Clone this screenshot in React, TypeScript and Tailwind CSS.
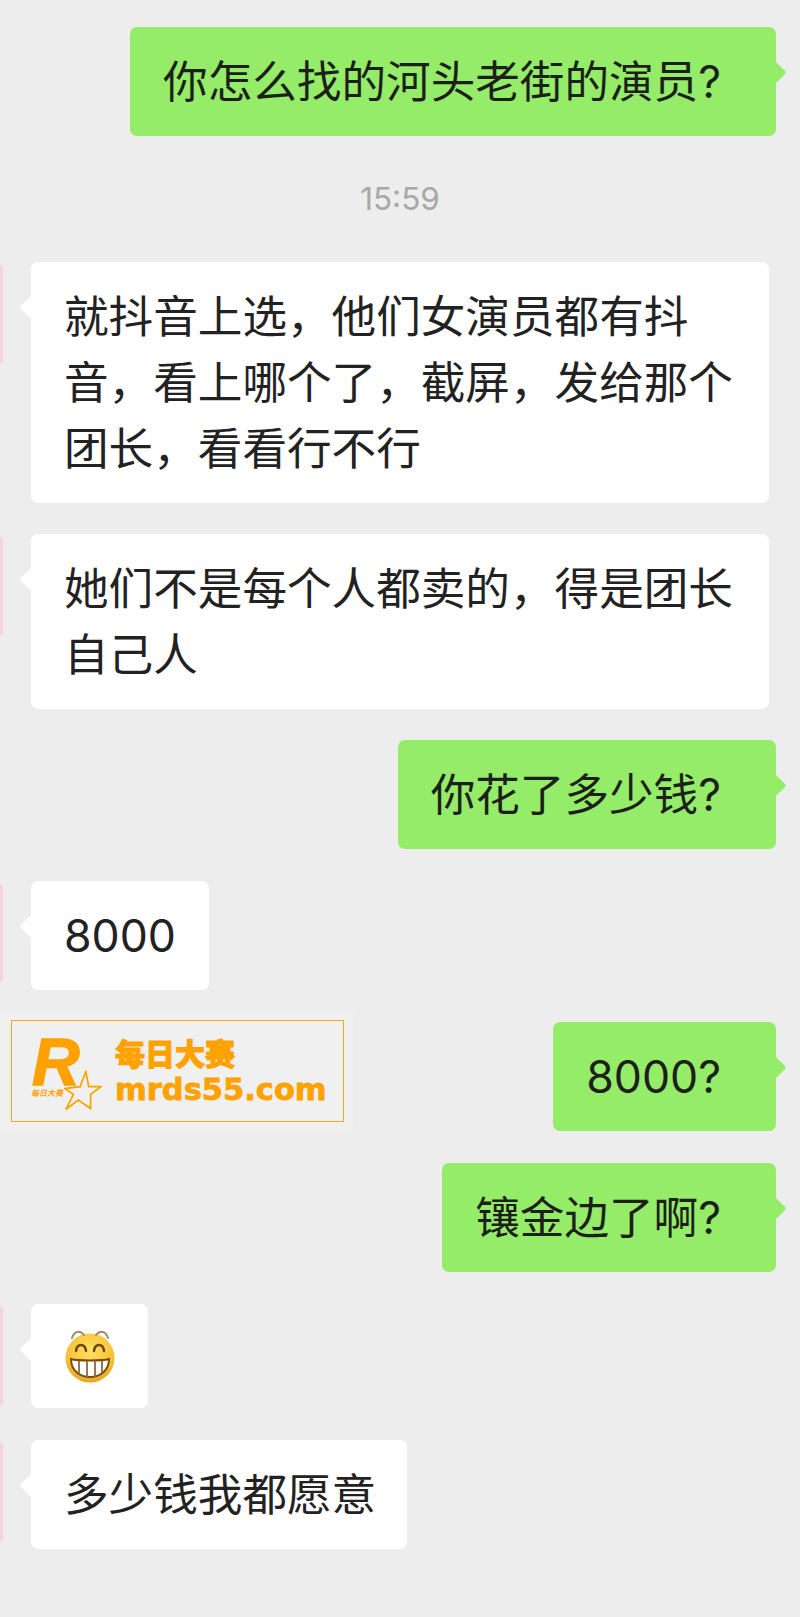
const font = { fontFamily: 'Inter, "Noto Sans CJK SC", "Noto Sans", sans-serif' };

function Tail({ side, color }: { side: "left" | "right"; color: string }) {
  return (
    <div
      className={`absolute top-[37px] h-[17px] w-[17px] rotate-45 rounded-[2px] ${side === "left" ? "left-[-8px]" : "right-[-7px]"} ${color}`}
    />
  );
}

function Green({ children, mt = "" }: { children: React.ReactNode; mt?: string }) {
  return (
    <div className={`relative self-end mr-[24px] rounded-[7px] bg-[#95ec69] pb-[21px] pl-[33px] pr-[55px] pt-[22px] text-[44.6px] leading-[66px] text-[#1c1f1a] whitespace-nowrap ${mt}`}>
      <Tail side="right" color="bg-[#95ec69]" />
      {children}
    </div>
  );
}

function White({ children, className = "" }: { children: React.ReactNode; className?: string }) {
  return (
    <div className="flex items-start self-start">
      <div className="mt-[3px] h-[98px] w-[3px] rounded-r-[3px] bg-[#f4d3df]" />
      <div className={`relative ml-[28px] rounded-[7px] bg-white pb-[21px] pl-[33px] pr-[31px] pt-[22px] text-[44.6px] leading-[66px] text-[#222222] ${className}`}>
        <Tail side="left" color="bg-white" />
        {children}
      </div>
    </div>
  );
}

function Banner() {
  return (
    <div className="flex h-[120px] w-[353px] items-center bg-[#f0f0f0] pl-[11px]">
      <div className="flex h-[102px] w-[333px] items-center border border-[#ffa51f]">
        <div className="relative h-[100px] w-[103px] shrink-0">
          <span
            className="absolute left-[20px] top-[17px] text-[66px] font-bold italic leading-[48px] text-[#ffa200] [-webkit-text-stroke:1.5px_#ffa200]"
            style={{ fontFamily: '"Liberation Sans", sans-serif' }}
          >
            R
          </span>
          <svg className="absolute left-[52px] top-[49px]" width="38" height="41" viewBox="-1 -1 40 42">
            <path
              d="M22 0 L25 16 L38 16 L27 24 L27 39 L14 30 L1 40 L9 24 L0 18 L16 16 Z"
              fill="#f0f0f0"
              stroke="#ffa200"
              strokeWidth="1.8"
            />
          </svg>
          <span className="absolute left-[19px] top-[66px] text-[8px] font-bold italic leading-[12px] text-[#ffa200] whitespace-nowrap" style={font}>
            每日大赛
          </span>
        </div>
        <div className="flex flex-col">
          <span className="text-[30px] font-black leading-[36px] text-[#ffa200] whitespace-nowrap [-webkit-text-stroke:1px_#ffa200]" style={font}>
            每日大赛
          </span>
          <span
            className="mt-[2px] text-[30.5px] font-bold leading-[32px] text-[#ffa200] whitespace-nowrap [-webkit-text-stroke:0.8px_#ffa200]"
            style={{ fontFamily: '"DejaVu Sans", sans-serif' }}
          >
            mrds55.com
          </span>
        </div>
      </div>
    </div>
  );
}

function Grin() {
  return (
    <svg width="52" height="54" viewBox="0 0 52 54">
      <defs>
        <radialGradient id="face" cx="50%" cy="35%" r="70%">
          <stop offset="0%" stopColor="#ffe066" />
          <stop offset="70%" stopColor="#f7c133" />
          <stop offset="100%" stopColor="#e09a1c" />
        </radialGradient>
      </defs>
      <circle cx="26" cy="29" r="24.5" fill="url(#face)" />
      <path d="M8 9 C10 2 16 1 20 6" fill="none" stroke="#a08a6a" strokeWidth="2" strokeLinecap="round" />
      <path d="M32 6 C36 1 42 2 44 9" fill="none" stroke="#a08a6a" strokeWidth="2" strokeLinecap="round" />
      <path d="M12 22 C13 14 21 14 22 22" fill="none" stroke="#6b4612" strokeWidth="2.4" strokeLinecap="round" />
      <path d="M30 22 C31 14 39 14 40 22" fill="none" stroke="#6b4612" strokeWidth="2.4" strokeLinecap="round" />
      <path d="M7 30 C14 32 38 32 45 30 C45 42 36 48 26 48 C16 48 7 42 7 30 Z" fill="#fff" stroke="#7a4a10" strokeWidth="2" />
      <path d="M15 32 V45 M23 32 V48 M31 32 V48 M38 32 V44" stroke="#8a6a3a" strokeWidth="1.8" />
    </svg>
  );
}

export default function App() {
  return (
    <div className="flex h-[1617px] w-[800px] flex-col overflow-hidden bg-[#ededed] pt-[27px]" style={font}>
      <Green>你怎么找的河头老街的演员?</Green>
      <div className="mt-[40px] text-center text-[31.5px] leading-[46px] text-[#a8a8a8]">15:59</div>
      <div className="mt-[40px] flex flex-col">
        <White className="w-[738px]">就抖音上选，他们女演员都有抖音，看上哪个了，截屏，发给那个团长，看看行不行</White>
        <div className="mt-[31px]" />
        <White className="w-[738px]">她们不是每个人都卖的，得是团长自己人</White>
      </div>
      <Green mt="mt-[31px]">你花了多少钱?</Green>
      <div className="mt-[32px]">
        <White className="w-[178px]">8000</White>
      </div>
      <div className="mt-[21px] flex items-start justify-between">
        <Banner />
        <div className="mt-[11px] flex">
          <Green>8000?</Green>
        </div>
      </div>
      <Green mt="mt-[32px]">镶金边了啊?</Green>
      <div className="mt-[32px]">
        <div className="flex items-start">
          <div className="mt-[3px] h-[98px] w-[3px] rounded-r-[3px] bg-[#f4d3df]" />
          <div className="relative ml-[28px] flex h-[104px] w-[117px] items-center justify-center rounded-[7px] bg-white">
            <Tail side="left" color="bg-white" />
            <Grin />
          </div>
        </div>
      </div>
      <div className="mt-[32px]">
        <White>多少钱我都愿意</White>
      </div>
    </div>
  );
}
